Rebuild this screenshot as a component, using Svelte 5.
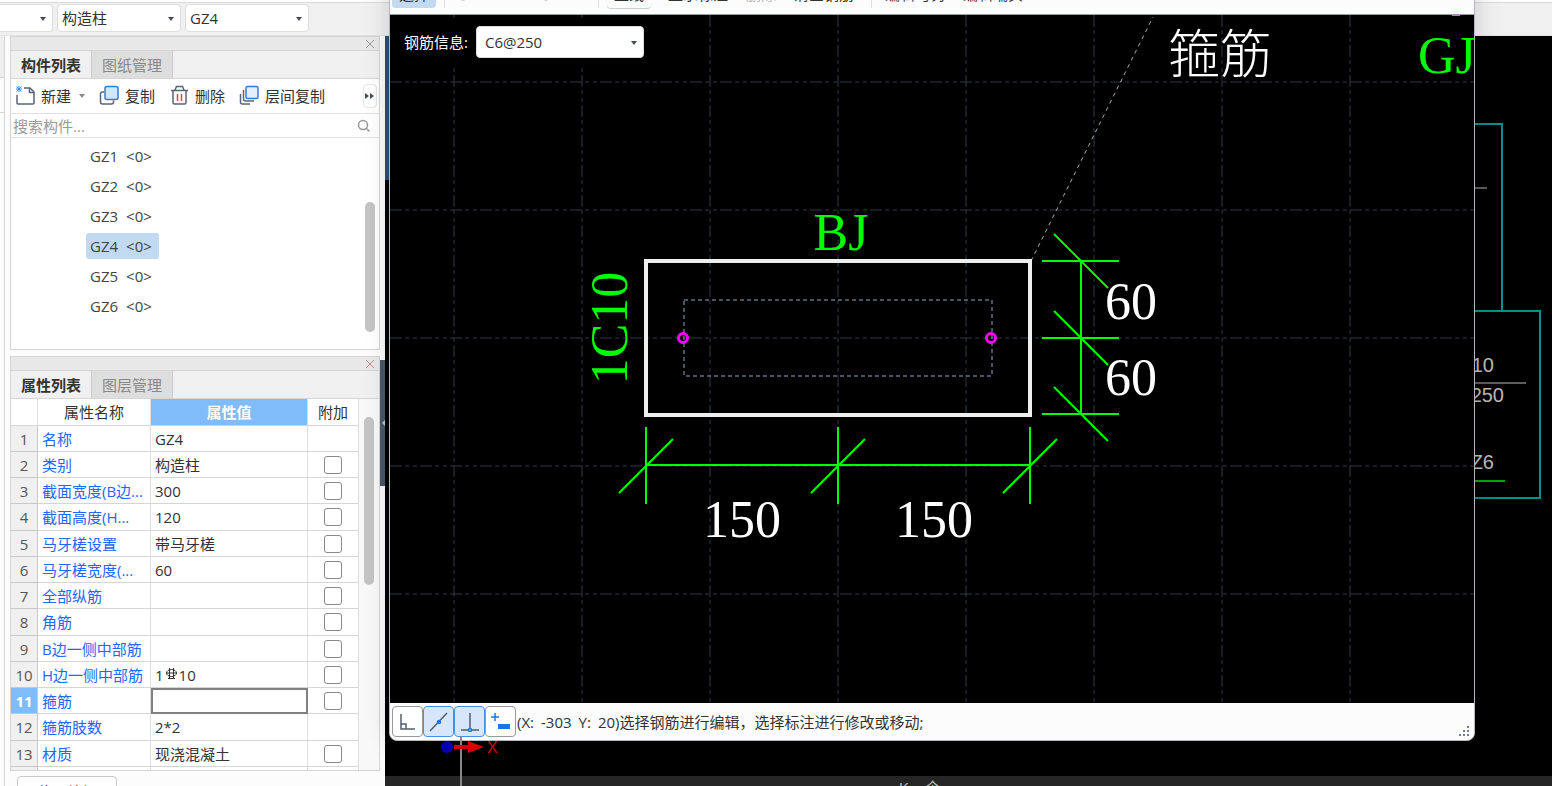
<script lang="ts">
	type Row = { name: string; value?: string; check?: boolean; rebar?: boolean };

	const components = ['GZ1', 'GZ2', 'GZ3', 'GZ4', 'GZ5', 'GZ6'];
	const rows: Row[] = [
		{ name: '名称', value: 'GZ4' },
		{ name: '类别', value: '构造柱', check: true },
		{ name: '截面宽度(B边)(mm)', value: '300', check: true },
		{ name: '截面高度(H边)(mm)', value: '120', check: true },
		{ name: '马牙槎设置', value: '带马牙槎', check: true },
		{ name: '马牙槎宽度(mm)', value: '60', check: true },
		{ name: '全部纵筋', check: true },
		{ name: '角筋', check: true },
		{ name: 'B边一侧中部筋', check: true },
		{ name: 'H边一侧中部筋', rebar: true, check: true },
		{ name: '箍筋', check: true },
		{ name: '箍筋肢数', value: '2*2' },
		{ name: '材质', value: '现浇混凝土', check: true }
	];
	// long names are cut the way the property grid cuts them
	const shortNames: Record<string, string> = {
		'截面宽度(B边)(mm)': '截面宽度(B边...',
		'截面高度(H边)(mm)': '截面高度(H...',
		'马牙槎宽度(mm)': '马牙槎宽度(...'
	};

	const gridX = Array.from({ length: 20 }, (_, i) => 64 + i * 128);
	const gridY = Array.from({ length: 12 }, (_, i) => 67 + i * 128);
	const sideTicks = [246, 323, 399];
	const bottomTicks = [256, 448, 640];

	let selected = $state('GZ4');
	let activeRow = $state(10);
	let stirrup = $state('C6@250');
</script>

<div class="app">
	<header class="topbar">
		<div class="select narrow"><select aria-label="楼层"><option></option></select></div>
		<div class="select"><select aria-label="构件类型"><option>构造柱</option></select></div>
		<div class="select"><select aria-label="构件"><option>GZ4</option></select></div>
	</header>

	<div class="workspace">
		<aside class="dock">
			<div class="edge"><i></i><i></i></div>
			<div class="panels">
				<section class="panel list-panel">
					<div class="panel-head">
						<button class="close" aria-label="关闭">
							<svg width="10" height="10"><path d="M1 1l8 8M9 1l-8 8" /></svg>
						</button>
					</div>
					<div class="tabs">
						<button class="tab active">构件列表</button>
						<button class="tab">图纸管理</button>
					</div>
					<div class="tools">
						<button class="tool">
							<svg width="22" height="22" fill="none" stroke="#5b6475" stroke-width="1.5">
								<path d="M9 3h6l4 4v11a1 1 0 0 1-1 1H3a1 1 0 0 1-1-1V10" />
								<path d="M14.500 3v4.500H19" />
								<path d="M4 1v6M1 4h6M1.500 1.500l5 5M6.500 1.500l-5 5" stroke="#2d8cf0" stroke-width="1" />
							</svg>
							新建
							<span class="caret"></span>
						</button>
						<button class="tool">
							<svg width="22" height="22" fill="none" stroke-width="1.5">
								<path d="M5 7H3.500a2 2 0 0 0-2 2v8a2 2 0 0 0 2 2h9a2 2 0 0 0 2-2v-1.500" stroke="#5b6475" />
								<rect x="6" y="1.500" width="13" height="13" rx="2" fill="#d5e6fb" stroke="#2d7de0" />
							</svg>
							复制
						</button>
						<button class="tool">
							<svg width="22" height="22" fill="none" stroke="#5b6475" stroke-width="1.500">
								<path d="M2 5.500h17M6 5l1.500-3.500h6L15 5M4 6v11.500a1.500 1.500 0 0 0 1.500 1.500h10a1.500 1.500 0 0 0 1.500-1.500V6" />
								<path d="M8.500 9v7M12.500 9v7" stroke="#e8434b" />
							</svg>
							删除
						</button>
						<button class="tool">
							<svg width="22" height="22" fill="none" stroke-width="1.5">
								<path d="M4.500 5v9a2 2 0 0 0 2 2H15M1.500 9v8a2 2 0 0 0 2 2H11" stroke="#5b6475" />
								<rect x="7" y="1.500" width="12" height="12" rx="1.500" fill="#e3effd" stroke="#2d7de0" />
							</svg>
							层间复制
						</button>
						<button class="more" aria-label="更多">
							<svg width="10" height="8"><path d="M0 1l4 3-4 3zM5 1l4 3-4 3z" fill="#444b58" /></svg>
						</button>
					</div>
					<label class="search">
						<input type="text" placeholder="搜索构件..." aria-label="搜索构件" />
						<svg width="14" height="14" fill="none" stroke="#999" stroke-width="1.500">
							<circle cx="6" cy="6" r="4.500" /><path d="M9.500 9.500l3 3" />
						</svg>
					</label>
					<div class="list-body">
						<ul>
							{#each components as c}
								<li>
									<button class:selected={selected === c} onclick={() => (selected = c)}>
										<span>{c}</span><span>&lt;0&gt;</span>
									</button>
								</li>
							{/each}
						</ul>
						<div class="thumb list-thumb"></div>
					</div>
				</section>

				<section class="panel prop-panel">
					<div class="panel-head">
						<button class="close red" aria-label="关闭">
							<svg width="10" height="10"><path d="M1 1l8 8M9 1l-8 8" /></svg>
						</button>
					</div>
					<div class="tabs">
						<button class="tab active">属性列表</button>
						<button class="tab">图层管理</button>
					</div>
					<div class="props">
						<div class="table-clip">
							<table>
								<colgroup><col class="c-num" /><col class="c-name" /><col /><col class="c-add" /></colgroup>
								<thead>
									<tr><th></th><th>属性名称</th><th class="hot">属性值</th><th>附加</th></tr>
								</thead>
								<tbody>
									{#each rows as row, i}
										<tr class:current={activeRow === i} onclick={() => (activeRow = i)}>
											<td class="num">{i + 1}</td>
											<td class="name" title={row.name}>{shortNames[row.name] ?? row.name}</td>
											<td class="value">
												{#if row.rebar}
													1<svg class="rebar" width="13" height="14" fill="none" stroke="#333">
														<ellipse cx="6.500" cy="6" rx="5" ry="3.500" />
														<path d="M4.500 1v10M8.500 1v10M1 6h11M3 11.500h7" />
													</svg>10
												{:else}
													{row.value ?? ''}
												{/if}
											</td>
											<td class="add">
												{#if row.check}<input type="checkbox" aria-label="附加 {row.name}" />{/if}
											</td>
										</tr>
									{/each}
									<tr><td class="num"></td><td></td><td></td><td></td></tr>
								</tbody>
							</table>
						</div>
						<div class="gutter"><div class="thumb prop-thumb"></div></div>
					</div>
				</section>
				<button class="section-edit">截面编辑</button>
			</div>
			<button class="collapse" aria-label="收起"></button>
		</aside>

		<main class="model">
			<div class="model-edge"></div>
			<svg class="neighbour" width="77" height="480" fill="none">
				<path d="M0 88h27v187" stroke="#0e8c8c" stroke-width="2" />
				<path d="M0 275h65v187H0" stroke="#0e8c8c" stroke-width="2" />
				<path d="M0 152h12M0 347h51" stroke="#bbb" />
				<path d="M0 445h30" stroke="#00a800" stroke-width="2" />
				<g fill="#bbb" font-size="20" text-anchor="end">
					<text x="19" y="336">C10</text>
					<text x="29" y="366">250</text>
					<text x="19" y="433">Z6</text>
				</g>
			</svg>
			<svg class="axis" width="120" height="50">
				<path d="M76 0v50" stroke="#888" stroke-width="2" />
				<circle cx="62" cy="11" r="6" fill="#0000b0" />
				<path d="M69 9h14V5l16 6-16 6v-4H69z" fill="#d80000" />
				<text x="102" y="17" fill="#d80000" font-size="16">X</text>
			</svg>
			<div class="command"><span>K</span><span>个</span></div>
		</main>
	</div>

	<section class="dialog">
		<div class="dialog-tools">
			<button class="on">选择</button>
			<span class="sep"></span>
			<button class="icon" aria-label="撤销"><svg width="14" height="14"><circle cx="7" cy="7" r="6" /></svg></button>
			<button class="icon" aria-label="重做"><svg width="14" height="14"><circle cx="7" cy="7" r="6" /></svg></button>
			<span class="sep"></span>
			<button class="boxed">直线</button>
			<button class="text">显示标注</button>
			<button class="text" disabled>删除</button>
			<button class="text">清空钢筋</button>
			<span class="sep"></span>
			<button class="text">编辑弯钩</button>
			<button class="text">编辑端头</button>
		</div>

		<div class="canvas">
			<svg class="drawing" width="100%" height="100%" fill="none">
				<g stroke="#303a48" stroke-dasharray="12 3 4 4 4 3">
					{#each gridX as x}<line x1={x} x2={x} y1="0" y2="100%" />{/each}
					{#each gridY as y}<line x1="0" x2="100%" y1={y} y2={y} />{/each}
				</g>
				<path d="M641 246L763 2" stroke="#aaa" stroke-dasharray="4 4" />
				<rect x="256" y="246" width="384" height="154" stroke="#eee" stroke-width="4" />
				<rect x="294" y="285" width="308" height="76" stroke="#8ea6c8" stroke-dasharray="4 3" />
				<g stroke="#f0f" stroke-width="3">
					<circle cx="293" cy="323" r="4.500" /><circle cx="601" cy="323" r="4.500" />
				</g>
				<g stroke="#0f0" stroke-width="2">
					<path d="M691 246v153M256 450h384" />
					{#each sideTicks as y}
						<path d="M652 {y}h77M664 {y - 27}l54 54" />
					{/each}
					{#each bottomTicks as x}
						<path d="M{x} 412v77M{x - 27} 478l54-54" />
					{/each}
					<path d="M1062 0h8" />
				</g>
				<g class="dims" fill="#fff">
					<text x="715" y="304">60</text>
					<text x="715" y="380">60</text>
					<text x="352" y="522" text-anchor="middle">150</text>
					<text x="544" y="522" text-anchor="middle">150</text>
					<text class="han" x="778" y="58">箍筋</text>
				</g>
				<g class="dims" fill="#0f0">
					<text x="451" y="235" text-anchor="middle">BJ</text>
					<text transform="translate(237 313) rotate(-90)" text-anchor="middle">1C10</text>
					<text x="1028" y="58">GJ</text>
				</g>
			</svg>
			<div class="info">
				<label for="stirrup">钢筋信息:</label>
				<div class="select wide">
					<select id="stirrup" bind:value={stirrup}><option>C6@250</option></select>
				</div>
			</div>
		</div>

		<footer class="status">
			<button aria-label="正交">
				<svg width="20" height="20"><path d="M3 2v15h14M3 12h5v5" /></svg>
			</button>
			<button class="on" aria-label="中点">
				<svg width="20" height="20"><path d="M1 19L18 1" /><circle cx="10" cy="10" r="1.500" class="dot" /></svg>
			</button>
			<button class="on" aria-label="垂点">
				<svg width="20" height="20"><path d="M10 1v15M1 18h7M12 18h7" /><circle cx="10" cy="18" r="1.500" class="dot" /></svg>
			</button>
			<button aria-label="动态输入">
				<svg width="20" height="20"><path d="M4 1v8M0 5h8" class="blue" /><rect x="7" y="12" width="12" height="5" fill="#1b74e8" /></svg>
			</button>
			<p><span>(X:</span><span>-303</span><span>Y:</span><span>20)选择钢筋进行编辑，选择标注进行修改或移动;</span></p>
			<svg class="grip" width="12" height="12" fill="#777d88">
				<path d="M8 1h2v2H8zM4 5h2v2H4zM8 5h2v2H8zM0 9h2v2H0zM4 9h2v2H4zM8 9h2v2H8z" />
			</svg>
		</footer>
	</section>
</div>

<style>
	:global(body) {
		margin: 0;
		background: #000;
	}

	.app {
		position: relative;
		display: flex;
		flex-direction: column;
		height: 100vh;
		overflow: hidden;
		color: #333;
		font: 15px/20px 'Open Sans', 'Noto Sans CJK SC', sans-serif;
	}

	button,
	select,
	input {
		margin: 0;
		padding: 0;
		border: 0;
		background: none;
		color: inherit;
		font: inherit;
	}

	.topbar {
		display: flex;
		align-items: center;
		gap: 4px;
		box-sizing: border-box;
		height: 36px;
		flex: none;
		padding-top: 1px;
		border-bottom: 1px solid #e2e2e2;
		background: linear-gradient(#fcfcfc 2px, #d9d9d9 2px, #d9d9d9 3px, #f0f0f0 3px);
	}

	.select {
		position: relative;
		width: 124px;
	}

	.select.narrow {
		width: 53px;
	}

	.select.wide {
		width: 168px;
	}

	.select::after {
		content: '';
		position: absolute;
		right: 7px;
		top: 13px;
		border: 3px solid transparent;
		border-top: 4px solid #444b58;
		border-bottom: 0;
		pointer-events: none;
	}

	.select select {
		appearance: none;
		width: 100%;
		height: 28px;
		padding: 0 4px;
		border: 1px solid #ddd;
		border-radius: 4px;
		background: #fff;
	}

	.select.narrow select {
		border-left: 0;
		border-radius: 0 4px 4px 0;
	}

	.select.wide select {
		height: 32px;
		padding: 0 8px;
	}

	.select.wide::after {
		top: 15px;
	}

	.workspace {
		display: flex;
		flex: 1;
		min-height: 0;
	}

	.dock {
		position: relative;
		display: flex;
		flex: none;
		gap: 5px;
		box-sizing: border-box;
		width: 385px;
		padding-right: 5px;
		background: #fcfcfc;
	}

	.edge {
		box-sizing: border-box;
		width: 5px;
		border-right: 1px solid #d5d5d5;
	}

	.edge i {
		display: block;
		box-sizing: border-box;
		height: 42px;
		border-bottom: 1px solid #d5d5d5;
		background: #eee;
	}

	.edge i + i {
		height: 35px;
		background: none;
	}

	.panels {
		flex: 1;
		min-width: 0;
		overflow: hidden;
	}

	.panel {
		display: flex;
		flex-direction: column;
		box-sizing: border-box;
		border: 1px solid #d5d5d5;
		background: #fff;
	}

	.list-panel {
		height: 314px;
	}

	.prop-panel {
		height: 415px;
		margin-top: 6px;
	}

	.panel-head {
		display: flex;
		justify-content: flex-end;
		align-items: center;
		flex: none;
		height: 13px;
		padding-right: 4px;
		border-bottom: 1px solid #d5d5d5;
		background: #e8e8e8;
	}

	.close svg {
		display: block;
		stroke: #999;
	}

	.close.red svg {
		stroke: #c98a8a;
	}

	.tabs {
		display: flex;
		flex: none;
		height: 27px;
		border-bottom: 1px solid #d5d5d5;
		background: #f0f0f0;
	}

	.tab {
		width: 81px;
		border-right: 1px solid #c8ccd0;
		background: #dedede;
		color: #888;
	}

	.tab.active {
		background: #f0f0f0;
		color: #333;
		font-weight: 700;
	}

	.tools {
		display: flex;
		align-items: center;
		gap: 14px;
		flex: none;
		height: 34px;
		padding-left: 4px;
		border-bottom: 1px solid #e0e0e0;
	}

	.tool {
		display: flex;
		align-items: center;
		gap: 4px;
		white-space: nowrap;
	}

	.caret {
		margin-left: 4px;
		border: 3px solid transparent;
		border-top: 4px solid #888;
		border-bottom: 0;
	}

	.more {
		display: grid;
		place-items: center;
		box-sizing: border-box;
		width: 14px;
		height: 24px;
		margin-left: auto;
		margin-right: 2px;
		border: 1px solid #e6e6e6;
		border-radius: 4px;
	}

	.more svg {
		display: block;
	}

	.search {
		display: flex;
		align-items: center;
		flex: none;
		height: 23px;
		padding: 0 8px 0 2px;
		border-bottom: 1px solid #e0e0e0;
	}

	.search input {
		flex: 1;
		min-width: 0;
		outline: none;
	}

	.search input::placeholder {
		color: #999;
		opacity: 1;
	}

	.list-body {
		display: flex;
		justify-content: space-between;
		flex: 1;
	}

	ul {
		display: flex;
		flex-direction: column;
		gap: 4px;
		margin: 0;
		padding: 5px 0 0 75px;
		list-style: none;
	}

	li {
		height: 26px;
	}

	li button {
		display: flex;
		align-items: center;
		gap: 8px;
		height: 26px;
		padding: 0 7px 0 4px;
		border-radius: 3px;
		color: #444;
	}

	li button.selected {
		background: #c2d9f2;
	}

	.thumb {
		width: 10px;
		border-radius: 5px;
		background: #c4c4c4;
	}

	.list-thumb {
		height: 130px;
		margin: 64px 4px 0 0;
	}

	.props {
		display: flex;
		flex: 1;
		min-height: 0;
	}

	.table-clip {
		flex: 1;
		min-width: 0;
		overflow: hidden;
	}

	.gutter {
		width: 20px;
		border-left: 1px solid #ddd;
		background: #f8f8f8;
	}

	.prop-thumb {
		height: 168px;
		margin: 18px 0 0 5px;
	}

	table {
		width: 100%;
		table-layout: fixed;
		border-spacing: 0;
	}

	.c-num {
		width: 27px;
	}

	.c-name {
		width: 113px;
	}

	.c-add {
		width: 50px;
	}

	th,
	td {
		box-sizing: border-box;
		height: 26px;
		padding: 0;
		border-right: 1px solid #ddd;
		border-bottom: 1px solid #d5d5d5;
		white-space: nowrap;
		overflow: hidden;
	}

	/* the grid's row pitch is a little over 26px */
	th,
	tr:nth-child(4n) td {
		height: 27px;
	}

	th:last-child,
	td:last-child {
		border-right: 0;
	}

	th {
		font-weight: 400;
	}

	th.hot {
		background: #80bbfa;
		color: #fff;
		font-weight: 700;
	}

	.num {
		background: #f0f0f0;
		border-color: #c8c8c8;
		color: #555;
		text-align: center;
	}

	.name {
		padding-left: 4px;
		color: #2464ff;
	}

	.value {
		padding-left: 4px;
	}

	.rebar {
		margin: 0 1px;
		vertical-align: 0;
	}

	.current .num {
		background: #80bbfa;
		color: #fff;
		font-weight: 700;
	}

	.current .value {
		outline: 2px solid #808080;
		outline-offset: -2px;
	}

	.add {
		text-align: center;
	}

	.add input {
		appearance: none;
		display: block;
		box-sizing: border-box;
		width: 18px;
		height: 18px;
		margin: 0 auto;
		border: 1px solid #888;
		border-radius: 3px;
		background: #fff;
	}

	.section-edit {
		width: 100px;
		height: 32px;
		margin: 5px 0 0 7px;
		border: 1px solid #c8c8c8;
		border-radius: 4px;
		background: #fff;
	}

	.collapse {
		position: absolute;
		right: -1px;
		top: 324px;
		width: 6px;
		height: 126px;
		background: #4b5866;
	}

	.collapse::after {
		content: '';
		position: absolute;
		right: 0;
		top: 59px;
		border: 4px solid transparent;
		border-right-color: #c4c9cf;
		border-left: 0;
	}

	.model {
		position: relative;
		flex: 1;
		min-width: 0;
		background: #000;
		font-family: 'Liberation Sans Narrow', 'Liberation Sans', 'Noto Sans CJK SC', sans-serif;
	}

	.model-edge {
		width: 4px;
		height: 144px;
		background: #23507f;
	}

	.neighbour {
		position: absolute;
		top: 0;
		right: 0;
	}

	.axis {
		position: absolute;
		left: 0;
		bottom: 0;
		z-index: 1;
	}

	.command {
		position: absolute;
		inset: auto 0 0 0;
		display: flex;
		gap: 16px;
		box-sizing: border-box;
		height: 10px;
		padding: 2px 0 0 514px;
		overflow: hidden;
		background: #262626;
		color: #bbb;
	}

	.dialog {
		position: absolute;
		inset: -24px 77px 45px 389px;
		display: flex;
		flex-direction: column;
		box-sizing: border-box;
		border: 1px solid #b4b8bc;
		border-radius: 8px;
		background: #fcfcfc;
		overflow: hidden;
		box-shadow: 0 0 24px rgba(0, 0, 0, 0.16);
	}

	.dialog-tools {
		display: flex;
		align-items: flex-start;
		flex: none;
		height: 38px;
		padding: 3px 2px 0;
		box-sizing: border-box;
		border-bottom: 1px solid #9aa0a0;
	}

	.dialog-tools button {
		height: 28px;
		padding: 0 7px;
		border-radius: 4px;
		white-space: nowrap;
	}

	.dialog-tools .on {
		background: #c2d9f2;
	}

	.dialog-tools .boxed {
		margin: 0 8px 0 4px;
		box-shadow: 0 1px 1px #ccc;
	}

	.dialog-tools .text {
		padding: 0 9px;
	}

	.dialog-tools .text:disabled {
		color: #b8b8b8;
	}

	.dialog-tools .icon {
		width: 83px;
		text-align: left;
	}

	.dialog-tools .icon + .icon {
		width: 58px;
	}

	.icon svg {
		display: block;
		fill: none;
		stroke: #999;
	}

	.sep {
		width: 1px;
		height: 28px;
		margin: 0 4px 0 8px;
		background: #ddd;
	}

	.canvas {
		position: relative;
		flex: 1;
		min-height: 0;
		background: #000;
	}

	.drawing {
		display: block;
	}

	.dims {
		font: 52px 'Liberation Serif', serif;
	}

	.han {
		font-family: 'Noto Sans CJK SC', sans-serif;
		font-weight: 300;
	}

	.info {
		position: absolute;
		left: 0;
		top: 3px;
		display: flex;
		align-items: center;
		gap: 8px;
		box-sizing: border-box;
		width: 318px;
		height: 48px;
		padding-left: 14px;
		background: #000;
		color: #fff;
	}

	.info select {
		color: #333;
	}

	.status {
		display: flex;
		align-items: center;
		flex: none;
		height: 37px;
		padding: 0 3px 0 2px;
	}

	.status button {
		display: grid;
		place-items: center;
		box-sizing: border-box;
		width: 31px;
		height: 31px;
		border: 1px solid #999;
		border-radius: 4px;
		background: #fff;
	}

	.status button.on {
		border-color: #4a90e2;
		background: #d8e6fa;
	}

	.status button svg {
		fill: none;
		stroke: #555d6b;
		stroke-width: 1.5;
	}

	.status .dot,
	.status .blue {
		stroke: #1b74e8;
	}

	.status rect {
		stroke: none;
	}

	.status p {
		display: flex;
		flex: 1;
		gap: 7px;
		margin: 0 0 0 1px;
		white-space: nowrap;
	}

	.grip {
		align-self: flex-end;
		margin-bottom: 3px;
	}
</style>
